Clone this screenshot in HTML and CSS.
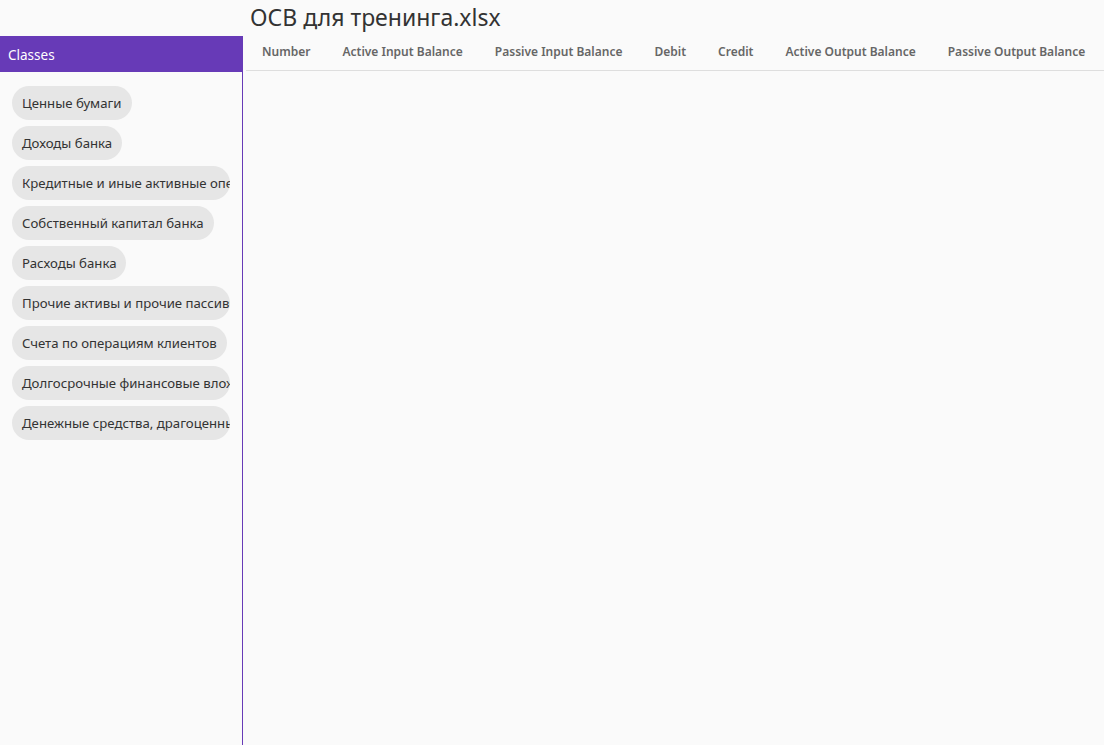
FILE: index.html
```html
<!DOCTYPE html>
<html>
<head>
<meta charset="utf-8">
<link rel="stylesheet" href="styles.css">
</head>
<body>
<div class="page">
  <div class="topbar">
    <div class="topbar-spacer"></div>
    <h1 class="title">ОСВ для тренинга.xlsx</h1>
  </div>
  <div class="body">
    <aside class="sidebar">
      <div class="sidebar-header">Classes</div>
      <div class="chips">
        <div class="chip">Ценные бумаги</div>
        <div class="chip">Доходы банка</div>
        <div class="chip">Кредитные и иные активные операции</div>
        <div class="chip">Собственный капитал банка</div>
        <div class="chip">Расходы банка</div>
        <div class="chip">Прочие активы и прочие пассивы</div>
        <div class="chip">Счета по операциям клиентов</div>
        <div class="chip">Долгосрочные финансовые вложения</div>
        <div class="chip">Денежные средства, драгоценные металлы</div>
      </div>
    </aside>
    <main class="main">
      <div class="table-head">
        <div class="th">Number</div>
        <div class="th">Active Input Balance</div>
        <div class="th">Passive Input Balance</div>
        <div class="th">Debit</div>
        <div class="th">Credit</div>
        <div class="th">Active Output Balance</div>
        <div class="th">Passive Output Balance</div>
      </div>
    </main>
  </div>
</div>
</body>
</html>
```
FILE: styles.css
```css
html, body {
  margin: 0;
  padding: 0;
  height: 100%;
  background: #fafafa;
  font-family: "Noto Sans", "Open Sans", sans-serif;
  color: #333;
}
.page {
  display: flex;
  flex-direction: column;
  height: 100vh;
  overflow: hidden;
}
.topbar {
  display: flex;
  height: 36px;
  flex: none;
}
.topbar-spacer {
  width: 250px;
  flex: none;
}
.title {
  margin: 0;
  font-size: 23px;
  font-weight: 400;
  line-height: 34px;
  color: #333;
  white-space: nowrap;
}
.body {
  display: flex;
  flex: 1;
  min-height: 0;
}
.sidebar {
  width: 242px;
  flex: none;
  border-right: 1px solid #673ab7;
  display: flex;
  flex-direction: column;
}
.sidebar-header {
  height: 36px;
  background: #673ab7;
  color: #fff;
  font-size: 13.5px;
  line-height: 38px;
  padding-left: 8px;
}
.chips {
  display: flex;
  flex-direction: column;
  align-items: flex-start;
  gap: 6px;
  padding: 14px 12px 0 12px;
}
.chip {
  max-width: 198px;
  height: 34px;
  line-height: 34px;
  padding: 0 10px;
  border-radius: 17px;
  background: #e6e6e6;
  font-size: 13.2px;
  color: #333;
  white-space: nowrap;
  overflow: hidden;
  text-overflow: clip;
}
.main {
  flex: 1;
  min-width: 0;
  padding-left: 3px;
}
.table-head {
  display: flex;
  height: 34px;
  border-bottom: 1px solid #dedede;
}
.th {
  padding: 0 16px;
  font-size: 12px;
  font-weight: 600;
  color: #666;
  line-height: 32px;
  white-space: nowrap;
}
```
